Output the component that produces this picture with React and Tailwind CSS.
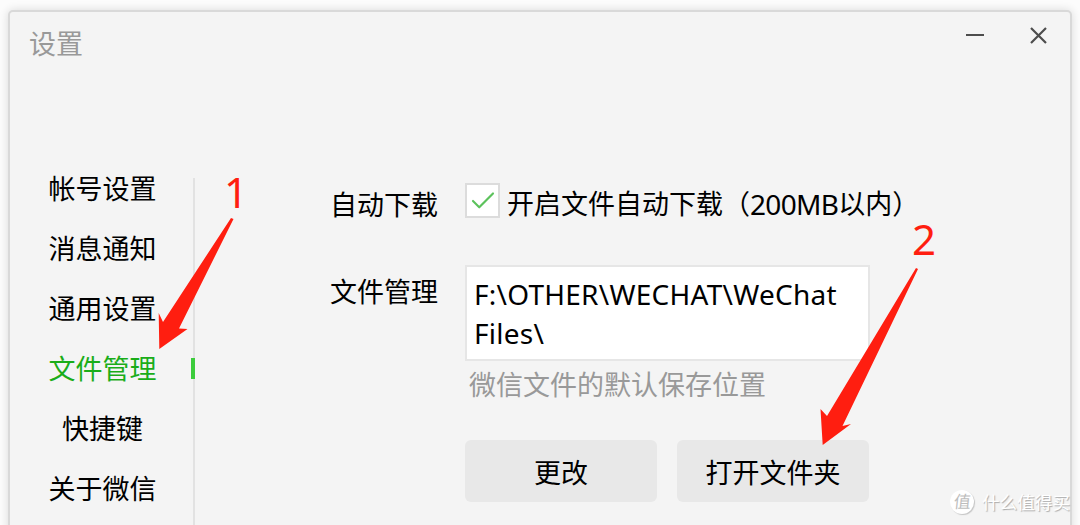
import { Check } from "lucide-react";

const navItems = [
  { label: "帐号设置" },
  { label: "消息通知" },
  { label: "通用设置" },
  { label: "文件管理", active: true },
  { label: "快捷键" },
  { label: "关于微信" },
];

function TitleBar() {
  return (
    <header className="flex h-[166px] shrink-0 justify-between pl-[19px] pr-[23px]">
      <h1 className="mt-4 h-8 text-[27px] leading-8 text-[#999999]">设置</h1>
      <div className="mt-[13px] flex h-5 items-center gap-[46px]">
        <button aria-label="最小化" className="h-[2px] w-[18px] bg-[#4d4d4d]" />
        <button aria-label="关闭" className="h-[17px] w-[17px]">
          <svg viewBox="0 0 17 17" className="block h-full w-full" stroke="#4d4d4d" strokeWidth="2.2">
            <path d="M1 1 16 16M16 1 1 16" />
          </svg>
        </button>
      </div>
    </header>
  );
}

function Sidebar() {
  return (
    <nav className="flex w-[185px] shrink-0 flex-col gap-9 border-r-2 border-[#e2e2e2]">
      {navItems.map((item) => (
        <div key={item.label} className="-mr-0.5 flex h-6 items-center">
          <span
            className={
              item.active
                ? "flex-1 pb-0.5 text-center leading-6 text-[#1aad19]"
                : "flex-1 pb-0.5 text-center leading-6"
            }
          >
            {item.label}
          </span>
          <span className={item.active ? "-ml-1 -mt-[3px] h-[21px] w-1 bg-[#3ccc3c]" : "-ml-1 w-1"} />
        </div>
      ))}
    </nav>
  );
}

function Arrow({ points }) {
  return <polygon points={points} fill="#ff1e10" />;
}

export default function App() {
  return (
    <div className="relative h-[525px] w-[1080px] overflow-hidden bg-[#fcfcfc] pl-[8px] pt-[10px] font-['Noto_Sans','Noto_Sans_CJK_SC',sans-serif] text-[27px] text-black">
      <div className="flex h-[560px] w-[1064px] flex-col rounded-[5px] border-2 border-[#d9d9d9] bg-[#f4f4f4] shadow-[0_0_10px_rgba(0,0,0,0.14)]">
        <TitleBar />
        <div className="flex min-h-0 flex-1">
          <Sidebar />
          <main className="flex flex-col pl-[135px]">
            <div className="mt-[5px] flex h-[35px] items-center">
              <span className="mt-2 w-[135px] leading-9">自动下载</span>
              <span className="flex h-[35px] w-[35px] items-center justify-center border-2 border-[#dcdcdc] bg-white">
                <Check className="h-[30px] w-[30px] text-[#5cc25c]" strokeWidth={1.7} />
              </span>
              <span className="ml-[7px] mt-[7px] flex leading-9">
                开启文件自动下载（
                <span className="text-[28px] tracking-[-0.7px]">200MB</span>
                以内）
              </span>
            </div>

            <div className="mt-[47px] flex">
              <span className="mt-[9px] w-[135px] leading-9">文件管理</span>
              <div className="flex flex-col">
                <div className="h-[96px] w-[405px] border-2 border-[#e6e6e6] bg-white pl-[7px] pt-[8px] text-[28px] leading-[39px] tracking-[0.25px]">
                  F:\OTHER\WECHAT\WeChat
                  <br />
                  Files\
                </div>
                <p className="mt-[6px] pl-[4px] leading-9 text-[#999999]">微信文件的默认保存位置</p>
                <div className="mt-[37px] flex gap-5">
                  <button className="h-[62px] w-[192px] rounded-[6px] bg-[#e8e8e8] pt-1">更改</button>
                  <button className="h-[62px] w-[192px] rounded-[6px] bg-[#e8e8e8] pt-1">打开文件夹</button>
                </div>
              </div>
            </div>
          </main>
        </div>
      </div>

      {/* numbered steps drawn over the window */}
      <svg className="pointer-events-none absolute left-0 top-0 h-[525px] w-[1080px]" viewBox="0 0 1080 525">
        <Arrow points="231,218 233.5,219 179,328.5 187.5,329 159.3,349 158.7,313 163,322" />
        <Arrow points="916,268 918,269 842.5,426 851,424 822.7,445 820.5,409 827,416" />
      </svg>
      <span className="absolute left-[224px] top-[171px] text-[42px] leading-[42px] text-[#ff1e10]">1</span>
      <span className="absolute left-[912px] top-[218px] text-[42px] leading-[42px] text-[#ff1e10]">2</span>

      <div className="absolute left-[950px] top-[490px] flex items-center gap-2 text-[17.6px] text-white">
        <span className="flex h-6 w-6 items-center justify-center rounded-full bg-white text-[17px] leading-6 text-[#bdbdbd] shadow-[1px_1px_1px_#c4c4c4]">
          <span className="-skew-x-6">值</span>
        </span>
        <span className="whitespace-nowrap leading-6 [text-shadow:1px_1px_1px_#aaaaaa]">什么值得买</span>
      </div>
    </div>
  );
}
